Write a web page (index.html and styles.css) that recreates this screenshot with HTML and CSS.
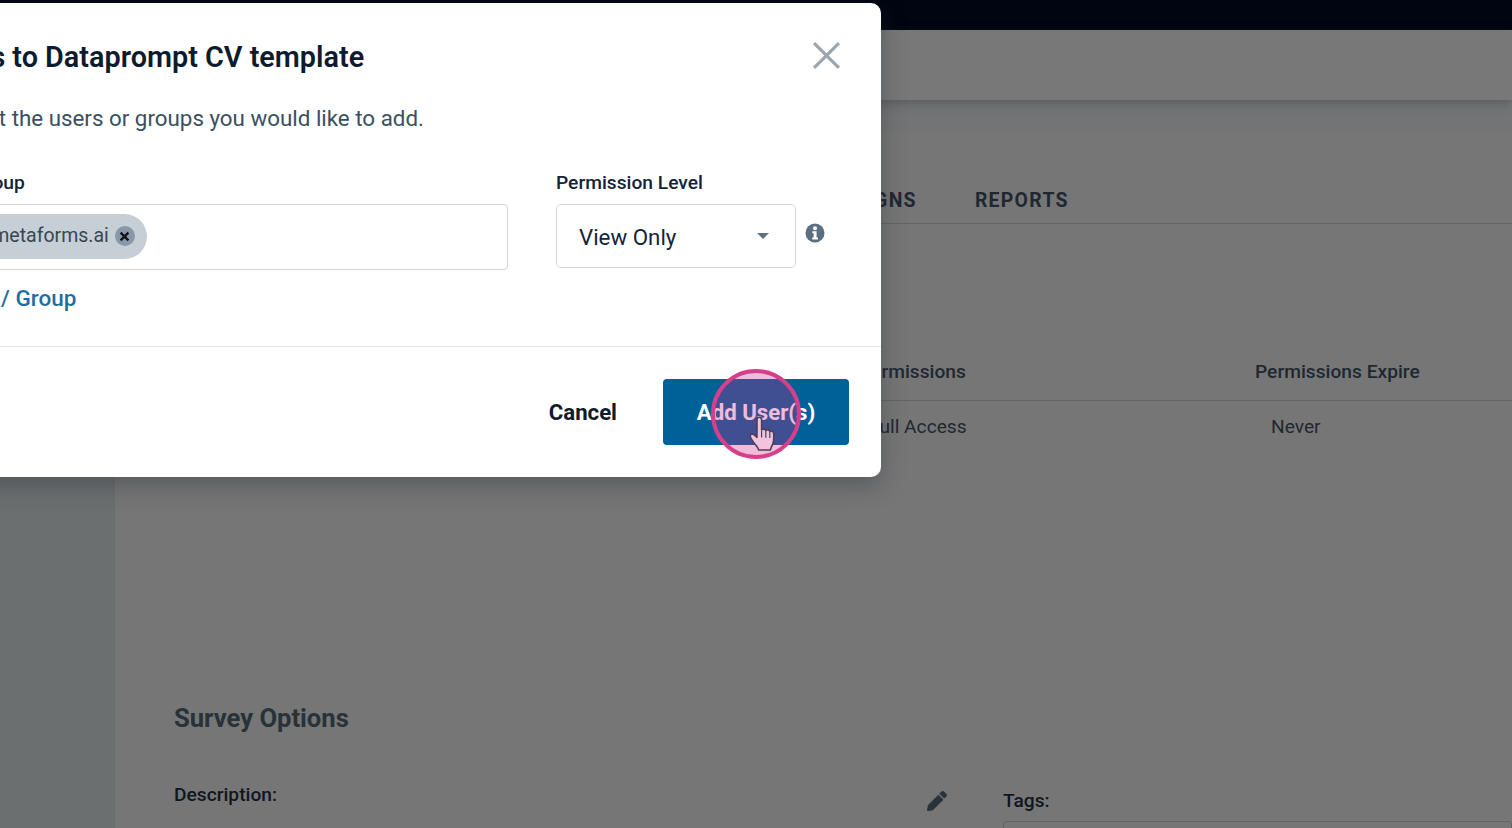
FILE: index.html
```html
<!DOCTYPE html>
<html lang="en">
<head>
<meta charset="utf-8">
<title>Add Users</title>
<link rel="stylesheet" href="styles.css">
</head>
<body>
<div class="page">
  <div class="topbar"></div>
  <header class="header"></header>
  <div class="layout">
    <aside class="sidebar"></aside>
    <main class="main">
      <div class="strip"></div>
      <nav class="tabs">
        <span class="tab">CAMPAIGNS</span>
        <span class="tab">REPORTS</span>
      </nav>
      <div class="table">
        <div class="table-head">
          <span class="th-perm">Permissions</span>
          <span class="th-exp">Permissions Expire</span>
        </div>
        <div class="table-row">
          <span class="td-perm">Full Access</span>
          <span class="td-exp">Never</span>
        </div>
      </div>
      <h2 class="section-title">Survey Options</h2>
      <div class="options">
        <div class="desc">
          <span class="opt-label">Description:</span>
          <svg class="pencil" viewBox="0 0 512 512"><path d="M497.9 142.1l-46.1 46.1c-4.7 4.7-12.3 4.7-17 0l-111-111c-4.7-4.7-4.7-12.3 0-17l46.1-46.1c18.7-18.7 49.1-18.7 67.9 0l60.1 60.1c18.8 18.7 18.8 49.1 0 67.9zM284.2 99.8L21.6 362.4.4 483.9c-2.9 16.4 11.4 30.6 27.8 27.8l121.5-21.3 262.6-262.6c4.7-4.7 4.7-12.3 0-17l-111-111c-4.8-4.7-12.4-4.7-17.1 0z"/></svg>
        </div>
        <div class="tags">
          <span class="opt-label">Tags:</span>
          <div class="tags-input"></div>
        </div>
      </div>
    </main>
  </div>
</div>

<div class="modal">
  <div class="modal-body">
    <h1 class="modal-title">Add Users to Dataprompt CV template</h1>
    <svg class="close" viewBox="0 0 28 28"><path d="M2 2L26 26M26 2L2 26"/></svg>
    <p class="modal-sub">Please select the users or groups you would like to add.</p>
    <div class="fields">
      <div class="field-user">
        <label class="field-label user-label">Add User or Group</label>
        <div class="user-input">
          <span class="chip"><span class="chip-text">user@metaforms.ai</span><span class="chip-x"><svg viewBox="0 0 10 10"><path d="M2 2L8 8M8 2L2 8"/></svg></span></span>
        </div>
      </div>
      <div class="field-perm">
        <label class="field-label">Permission Level</label>
        <div class="perm-row">
          <div class="select">View Only<span class="caret"></span></div>
          <svg class="info" viewBox="0 0 20 20"><circle cx="10" cy="10" r="9.5"/><circle class="info-mark" cx="10" cy="5.2" r="2"/><path class="info-mark" d="M7.4 8.3h4.2v6.1h1.3v2H7.2v-2h1.4v-4.1H7.4z"/></svg>
        </div>
      </div>
    </div>
    <a class="add-link">Add New User / Group</a>
  </div>
  <div class="modal-foot">
    <button class="btn-cancel">Cancel</button>
    <button class="btn-add">Add User(s)</button>
  </div>
</div>

<div class="click-ring"></div>
<svg class="hand" viewBox="0 0 30 36"><path d="M8 3.2c0-1.6 1.1-2.5 2.3-2.5s2.3.9 2.3 2.5v10.2c.5-1.1 3.7-1.2 4.2.6.7-1.1 3.5-.9 4 .9.9-.8 3.6-.3 3.8 1.9.4 4.3.3 7.5-.8 10.5-1 2.8-2.2 4.4-2.5 6.2H9.8c-.6-2.3-2.3-4-4.5-6.8C3.7 24.5 1.8 22.3 1.3 20.3c-.5-2.1 1.6-3.4 3.3-2.3L8 20.8z"/><path class="hand-line" d="M12.6 14v7M16.8 14.2v7M20.8 15v6.5"/></svg>
</body>
</html>
```
FILE: styles.css
```css
* { box-sizing: border-box; }
html, body { margin: 0; height: 100%; overflow: hidden; }
body { font-family: Roboto, "Liberation Sans", sans-serif; background: #767676; }

.page { height: 828px; display: flex; flex-direction: column; overflow: hidden; }
.topbar { height: 30px; background: #000511; flex: none; }
.header { height: 70px; flex: none; background: #787878; box-shadow: 0 3px 10px rgba(40, 45, 55, .35); position: relative; }
.layout { flex: 1; display: flex; min-height: 0; }
.sidebar { width: 115px; flex: none; background: #6c6f70; }
.main { flex: 1; padding: 0 0 0 59px; background: #767676; color: #1f2830; }

.strip { height: 32px; margin-left: -59px; background: #737475; }
.tabs { height: 92px; margin-left: -59px; display: flex; align-items: flex-end; padding: 0 0 10px 679px; gap: 58px; border-bottom: 1px solid #5f6467; }
.tab { font-size: 19.4px; font-weight: 700; letter-spacing: 1.3px; line-height: 24px; }

.table { margin: 131px 0 0 -59px; font-size: 19.2px; }
.table-head { display: flex; height: 46px; align-items: center; border-bottom: 1px solid #5f6467; padding-left: 744px; padding-bottom: 13px; font-weight: 500; }
.th-perm { width: 396px; }
.table-row { display: flex; height: 50px; align-items: center; padding-left: 754px; }
.td-perm { width: 402px; }

.section-title { margin: 251px 0 0; font-size: 25.6px; line-height: 32px; font-weight: 700; color: #283239; }
.options { display: flex; margin-top: 49px; }
.desc { width: 829px; display: flex; justify-content: space-between; align-items: flex-start; }
.opt-label { font-size: 19.2px; line-height: 24px; font-weight: 500; color: #0f1620; }
.pencil { width: 20px; height: 20px; fill: #2a333b; margin: 8px 56px 0 0; }
.tags { flex: 1; padding-top: 6px; }
.tags-input { height: 40px; margin-top: 8px; border: 1px solid #5f6467; border-radius: 4px; }

.modal { position: absolute; left: -150px; top: 3px; width: 1031px; height: 474px; background: #fff; border-radius: 10px; box-shadow: 0 8px 24px rgba(40, 45, 55, .4); }
.modal-body { height: 344px; padding: 36px 40px 0; border-bottom: 1px solid #e6e8ea; position: relative; }
.modal-title { margin: 0 0 0 -18px; font-size: 28.8px; line-height: 36px; font-weight: 600; color: #0d1b2e; }
.close { position: absolute; left: 962px; top: 38px; width: 29px; height: 29px; fill: none; stroke: #9aa5ad; stroke-width: 3; }
.modal-sub { margin: 28px 0 0 -16px; font-size: 22.35px; line-height: 30px; color: #3a4f63; }
.fields { display: flex; gap: 48px; margin-top: 39px; }
.field-user { width: 618px; }
.field-label { display: block; font-size: 19.2px; line-height: 22px; font-weight: 500; color: #12233a; }
.user-label { margin-left: -23px; }
.user-input { height: 66px; margin-top: 10px; border: 1px solid #d3d5d8; border-radius: 4px; display: flex; align-items: center; padding-left: 32px; }
.chip { height: 45px; padding: 0 12px 0 14px; margin-top: -2px; border-radius: 23px; background: #c6ced6; display: flex; align-items: center; gap: 6px; font-size: 19.5px; color: #3a4650; }
.chip-text { margin-top: -2px; }
.chip-x { width: 20px; height: 20px; border-radius: 50%; background: #8898a8; display: flex; align-items: center; justify-content: center; }
.chip-x svg { width: 13px; height: 13px; fill: none; stroke: #10141a; stroke-width: 1.8; }
.perm-row { display: flex; margin-top: 10px; }
.select { width: 240px; height: 64px; border: 1px solid #d3d5d8; border-radius: 5px; padding: 2px 0 0 22px; display: flex; align-items: center; justify-content: space-between; font-size: 22.3px; color: #15243a; }
.caret { width: 0; height: 0; margin: -2px 26px 0 0; border: 6px solid transparent; border-top-color: #5f7080; border-bottom: 0; }
.info { width: 20px; height: 20px; margin: 19px 0 0 9px; fill: #5b6f80; }
.info .info-mark { fill: #fff; }
.add-link { display: block; margin: 14px 0 0 -37px; font-size: 22.5px; line-height: 28px; font-weight: 500; color: #1c6ea4; }
.modal-foot { height: 130px; display: flex; justify-content: flex-end; align-items: center; gap: 46px; padding-right: 32px; }
.btn-cancel, .btn-add { border: 0; font: 700 22.2px/28px Roboto, "Liberation Sans", sans-serif; padding-top: 1px; }
.btn-cancel { background: none; color: #0d1b2e; padding-left: 0; padding-right: 0; }
.btn-add { width: 186px; height: 66px; border-radius: 4px; background: #006199; color: #fff; }

.click-ring { position: absolute; left: 711px; top: 369px; width: 90px; height: 90px; border-radius: 50%; border: 4px solid #d63f8c; background: rgba(206, 39, 132, .31); }
.hand { position: absolute; left: 749px; top: 416px; width: 30px; height: 37px; fill: #f3c3de; stroke: #4c4058; stroke-width: 1.6; stroke-linejoin: round; filter: blur(.4px); }
.hand .hand-line { fill: none; stroke-width: 1.2; }
```
